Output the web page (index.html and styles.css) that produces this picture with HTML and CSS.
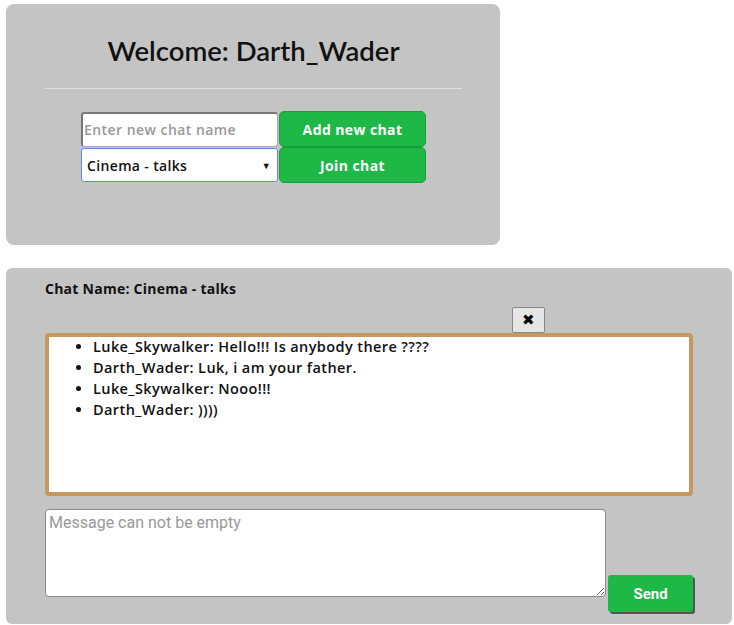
FILE: index.html
```html
<!DOCTYPE html>
<html>
<head>
<meta charset="utf-8">
<link rel="stylesheet" href="styles.css">
</head>
<body>
<section class="card welcome">
  <h1 class="title">Welcome: Darth_Wader</h1>
  <hr class="rule">
  <div class="form">
    <div class="row">
      <input class="field" type="text" placeholder="Enter new chat name">
      <button class="btn">Add new chat</button>
    </div>
    <div class="row">
      <div class="field select">Cinema - talks <span class="arrow">▼</span></div>
      <button class="btn">Join chat</button>
    </div>
  </div>
</section>
<section class="card chat">
  <div class="chat-name">Chat Name: Cinema - talks</div>
  <div class="close-row"><button class="close">✖</button></div>
  <div class="messages">
    <ul class="list">
      <li>Luke_Skywalker: Hello!!! Is anybody there ????</li>
      <li>Darth_Wader: Luk, i am your father.</li>
      <li>Luke_Skywalker: Nooo!!!</li>
      <li>Darth_Wader: ))))</li>
    </ul>
  </div>
  <div class="compose">
    <textarea class="input-msg" placeholder="Message can not be empty"></textarea>
    <button class="send">Send</button>
  </div>
</section>
</body>
</html>
```
FILE: styles.css
```css
html, body { margin: 0; background: #fff; }
body {
  padding: 4px 2px 0 6px;
  font-family: "Open Sans", Lato, sans-serif;
  color: #111;
}
.card {
  background: #c4c4c4;
  border-radius: 8px;
  box-sizing: border-box;
}
.welcome {
  width: 494px;
  height: 241px;
  padding: 27px 38px 0 39px;
}
.title {
  margin: 0;
  font-family: Lato, sans-serif;
  font-size: 27.5px;
  font-weight: 600;
  line-height: 40px;
  text-align: center;
  color: #111;
}
.rule {
  margin: 17px 0 0;
  border: 0;
  border-top: 1px solid #dedede;
  height: 0;
}
.form {
  margin-top: 22px;
  display: flex;
  flex-direction: column;
  align-items: center;
  gap: 0;
}
.row { display: flex; gap: 1px; align-items: center; }
.field {
  box-sizing: border-box;
  width: 197px;
  height: 35px;
  border: 1px solid #aaa;
  border-top: 2px solid #777;
  border-left: 2px solid #777;
  border-radius: 3px;
  background: #fff;
  font-family: "Open Sans", sans-serif;
  font-size: 14px;
  font-weight: 600;
  letter-spacing: 0.45px;
  padding: 0 1px;
  color: #111;
}
.field::placeholder { color: #999; }
.select {
  border: 1px solid #5d8fdb;
  display: flex;
  align-items: center;
  justify-content: space-between;
  padding: 0 6px 0 5px;
  height: 34px;
  letter-spacing: 0.35px;
}
.arrow { font-size: 9px; }
.btn {
  box-sizing: border-box;
  width: 147px;
  height: 36px;
  background: #1eb847;
  border: 1px solid #1a9e3d;
  border-radius: 5px;
  color: #fff;
  font-family: "Open Sans", sans-serif;
  font-size: 14px;
  font-weight: 700;
  letter-spacing: 0.4px;
}
.chat {
  margin-top: 23px;
  width: 726px;
  height: 356px;
  border-radius: 6px;
  padding: 11px 39px 0 39px;
}
.chat-name {
  font-size: 14px;
  font-weight: 700;
  line-height: 20px;
  letter-spacing: 0.25px;
}
.close-row {
  margin-top: 8px;
  padding-left: 467px;
  height: 26px;
}
.close {
  box-sizing: border-box;
  width: 33px;
  height: 26px;
  background: #e6e6e6;
  border: 1px solid #888;
  border-radius: 2px;
  font-size: 15px;
  padding: 0;
  color: #000;
}
.messages {
  box-sizing: border-box;
  width: 648px;
  height: 163px;
  background: #fff;
  border: 4px solid #c6985f;
  border-radius: 4px;
}
.list {
  margin: -1px 0 0;
  padding-left: 44px;
  font-size: 14.5px;
  font-weight: 600;
  line-height: 21px;
  letter-spacing: 0.4px;
}
.compose {
  margin-top: 13px;
  display: flex;
  align-items: flex-start;
  gap: 2px;
}
.input-msg {
  box-sizing: border-box;
  width: 561px;
  height: 88px;
  border: 1px solid #888;
  border-radius: 4px;
  padding: 3px;
  font-family: Roboto, sans-serif;
  font-size: 16px;
  margin: 0;
}
.input-msg::placeholder { color: #999; }
.send {
  margin-top: 66px;
  box-sizing: border-box;
  width: 85px;
  height: 37px;
  background: #1eb847;
  border: 0;
  border-radius: 3px;
  box-shadow: 2px 2px 0 #555;
  color: #fff;
  font-family: Roboto, sans-serif;
  font-size: 15px;
  font-weight: 700;
}
```
